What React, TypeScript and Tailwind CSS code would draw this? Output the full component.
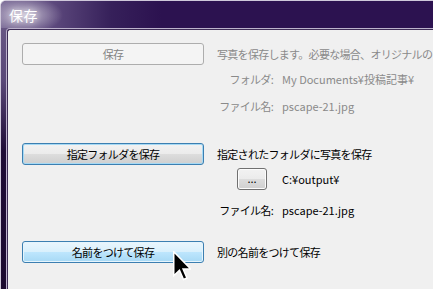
import React from 'react'

const jp = { fontFamily: '"Noto Sans CJK JP", "Noto Sans", sans-serif' }

function Cursor() {
  return (
    <svg
      className="absolute left-[172px] top-[250px]"
      width="18"
      height="30"
      viewBox="0 0 12 20"
    >
      <path
        d="M0.5 0.5 L0.5 16.5 L4.3 12.8 L7 19 L9.3 18 L6.7 12 L11.8 12 Z"
        fill="#000"
        stroke="#fff"
        strokeWidth="1"
        strokeLinejoin="miter"
      />
    </svg>
  )
}

export default function App() {
  return (
    <div className="w-[433px] h-[289px] bg-white overflow-hidden" style={jp}>
      <div className="relative w-[433px] h-[289px] rounded-tl-[6px] border-t border-l border-[#cfc8da] bg-[linear-gradient(to_bottom,#6d5c89_0px,#5a4878_80px,#1f0c36_150px,#1c0a30_100%)] flex flex-col">
        {/* title bar */}
        <div className="h-[27px] shrink-0 rounded-tl-[5px] bg-[radial-gradient(ellipse_38px_18px_at_24px_14px,rgba(255,255,255,0.6),rgba(255,255,255,0)_100%),linear-gradient(to_right,#7a6a96_0px,#5e4a7e_50px,#36205a_110px,#2c1250_160px,#2c1250_100%)] flex items-center pl-[8px]">
          <span className="text-white text-[14px] leading-none tracking-[0.5px] [text-shadow:0_0_6px_rgba(255,255,255,0.9)]">
            保存
          </span>
        </div>

        {/* client area */}
        <div className="flex-1 ml-[5px] border-t border-l border-[#bcb2cc] rounded-tl-[4px]">
          <div className="h-full border-t border-l border-[#3d2b55] rounded-tl-[3px] bg-[#f0f0f0] pl-[14px] pt-[13px] text-[11px] tracking-[-0.7px]">
            {/* section 1 */}
            <div className="flex gap-[13px]">
              <div className="w-[182px] h-[22px] shrink-0 rounded-[3px] border border-[#adadad] bg-[#f4f4f4] flex items-center justify-center text-[#838383]">
                保存
              </div>
              <div className="flex-1 min-w-0 overflow-hidden text-[#8a8a8a]">
                <div className="h-[22px] flex items-center whitespace-nowrap">
                  写真を保存します。必要な場合、オリジナルのファイル
                </div>
                <div className="h-[26px] mt-[1px] flex items-center whitespace-nowrap">
                  <span className="w-[56px] text-right">フォルダ:</span>
                  <span className="ml-[9px] tracking-[0px]">My Documents¥投稿記事¥</span>
                </div>
                <div className="h-[26px] mt-[1px] flex items-center whitespace-nowrap">
                  <span className="w-[56px] text-right">ファイル名:</span>
                  <span className="ml-[9px] tracking-[0px]">pscape-21.jpg</span>
                </div>
              </div>
            </div>

            {/* section 2 */}
            <div className="flex gap-[13px] mt-[24px]">
              <div className="w-[182px] h-[22px] shrink-0 rounded-[3px] border border-[#3c7fb1] shadow-[inset_0_0_0_1px_#a6d9f4] bg-[linear-gradient(to_bottom,#f2f2f2_0%,#ebebeb_50%,#dddddd_50%,#cfcfcf_100%)] flex items-center justify-center text-black">
                指定フォルダを保存
              </div>
              <div className="flex-1 min-w-0 text-black">
                <div className="h-[22px] flex items-center whitespace-nowrap">
                  指定されたフォルダに写真を保存
                </div>
                <div className="h-[22px] mt-[3px] flex items-center whitespace-nowrap">
                  <span className="w-[56px] flex justify-end pr-[6px]">
                    <span className="w-[30px] h-[22px] rounded-[3px] border border-[#707070] shadow-[inset_0_0_0_1px_#fcfcfc] bg-[linear-gradient(to_bottom,#f2f2f2_0%,#ebebeb_50%,#dddddd_50%,#cfcfcf_100%)] flex items-center justify-center tracking-[0px] leading-none pb-[2px]">
                      ...
                    </span>
                  </span>
                  <span className="ml-[9px] tracking-[0px]">C:¥output¥</span>
                </div>
                <div className="h-[24px] mt-[8px] flex items-center whitespace-nowrap">
                  <span className="w-[56px] text-right">ファイル名:</span>
                  <span className="ml-[9px] tracking-[0px]">pscape-21.jpg</span>
                </div>
              </div>
            </div>

            {/* section 3 */}
            <div className="flex gap-[13px] mt-[19px]">
              <div className="w-[182px] h-[22px] shrink-0 rounded-[3px] border border-[#3c7fb1] shadow-[inset_0_0_0_1px_#e6f5fd] bg-[linear-gradient(to_bottom,#eaf6fd_0%,#d9f0fc_50%,#bee6fd_50%,#a7d9f5_100%)] flex items-center justify-center text-black">
                名前をつけて保存
              </div>
              <div className="flex-1 min-w-0 text-black">
                <div className="h-[22px] flex items-center whitespace-nowrap">
                  別の名前をつけて保存
                </div>
              </div>
            </div>
          </div>
        </div>
        <Cursor />
      </div>
    </div>
  )
}
